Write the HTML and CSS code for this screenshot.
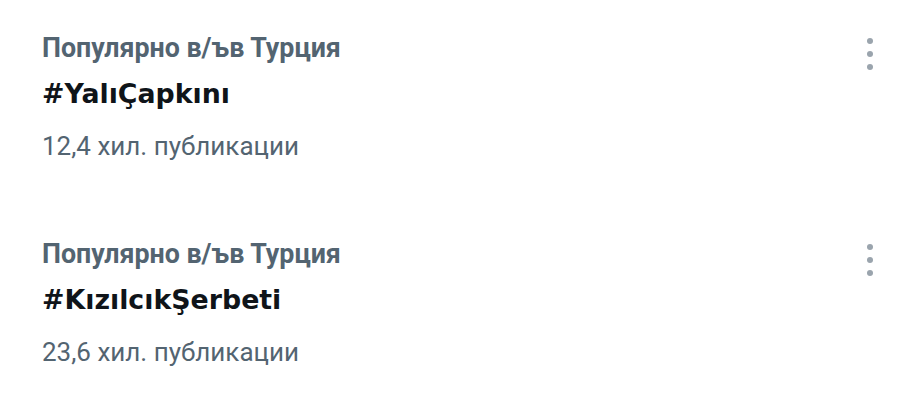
FILE: index.html
```html
<!DOCTYPE html>
<html lang="bg">
<head>
<meta charset="utf-8">
<title>Trends</title>
<link rel="stylesheet" href="styles.css">
</head>
<body>
<div class="list">
  <div class="trend">
    <div class="info">
      <div class="context">Популярно в/ъв Турция</div>
      <div class="tag">#YalıÇapkını</div>
      <div class="count">12,4 хил. публикации</div>
    </div>
    <div class="more"><span></span><span></span><span></span></div>
  </div>
  <div class="trend">
    <div class="info">
      <div class="context">Популярно в/ъв Турция</div>
      <div class="tag">#KızılcıkŞerbeti</div>
      <div class="count">23,6 хил. публикации</div>
    </div>
    <div class="more"><span></span><span></span><span></span></div>
  </div>
</div>
</body>
</html>
```
FILE: styles.css
```css
html, body {
  margin: 0;
  padding: 0;
  background: #ffffff;
}
body {
  font-family: Roboto, "Noto Sans", sans-serif;
  width: 921px;
  height: 418px;
  overflow: hidden;
}
.trend {
  display: flex;
  justify-content: space-between;
  align-items: flex-start;
  padding: 32px 48px 44px 42px;
}
.info {
  display: flex;
  flex-direction: column;
}
.context {
  font-size: 26.8px;
  line-height: 32px;
  font-weight: 700;
  color: #536471;
}
.tag {
  margin-top: 14px;
  font-family: "DejaVu Sans", Roboto, sans-serif;
  font-size: 26.8px;
  line-height: 32px;
  font-weight: 700;
  color: #0f1419;
}
.count {
  margin-top: 20px;
  font-size: 26px;
  line-height: 32px;
  font-weight: 400;
  color: #536471;
}
.more {
  display: flex;
  flex-direction: column;
  gap: 7px;
  margin-top: 6px;
}
.more span {
  width: 6px;
  height: 6px;
  border-radius: 50%;
  background: #9aa4ad;
}
```
